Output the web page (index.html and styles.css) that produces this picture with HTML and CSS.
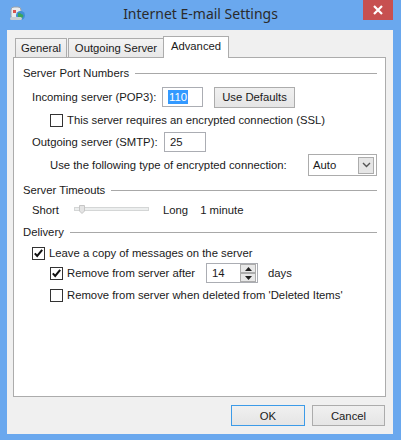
FILE: index.html
```html
<!DOCTYPE html>
<html lang="en">
<head>
    <meta charset="UTF-8">
    <title>Internet E-mail Settings</title>
    <link rel="stylesheet" href="styles.css">
</head>
<body>
<div class="window">
    <div class="titlebar">
        <div class="title-left">
            <svg class="app-icon" width="17" height="17" viewBox="0 0 17 17">
                <rect x="2" y="2" width="10" height="12" rx="3" fill="#e9ecef" stroke="#9aa3ad"/>
                <rect x="4" y="5" width="3" height="3" fill="#d9534f"/>
                <circle cx="11.5" cy="10.5" r="4.5" fill="#3f8fd6"/>
                <path d="M9 8 Q11 7 12 9 Q14 9 14.5 11 Q13 14 11 14 Q10 12 9 12 Z" fill="#3aa55a"/>
                <rect x="1" y="12" width="12" height="3" rx="1.5" fill="#c9ced4"/>
            </svg>
        </div>
        <span class="title">Internet E-mail Settings</span>
        <div class="title-right">
            <div class="close">
                <svg width="10" height="10" viewBox="0 0 10 10"><path d="M1 1 L9 9 M9 1 L1 9" stroke="#fff" stroke-width="2.2"/></svg>
            </div>
        </div>
    </div>

    <div class="client">
        <div class="tabs">
            <div class="tab t-general">General</div>
            <div class="tab t-outgoing">Outgoing Server</div>
            <div class="tab active">Advanced</div>
        </div>

        <div class="panel">
            <div class="group-head"><span>Server Port Numbers</span><div class="rule"></div></div>

            <div class="row r-incoming">
                <span class="lbl w-in">Incoming server (POP3):</span>
                <div class="textbox tb-in"><span class="sel">110</span></div>
                <button class="btn btn-defaults">Use Defaults</button>
            </div>

            <div class="row r-ssl ind2">
                <svg class="cb" width="13" height="13" viewBox="0 0 13 13"><rect x="0.5" y="0.5" width="12" height="12" fill="#fff" stroke="#333"/></svg>
                <span>This server requires an encrypted connection (SSL)</span>
            </div>

            <div class="row r-outgoing">
                <span class="lbl w-out">Outgoing server (SMTP):</span>
                <div class="textbox tb-out">25</div>
            </div>

            <div class="row r-encrypt ind2">
                <span class="lbl w-enc">Use the following type of encrypted connection:</span>
                <div class="select">
                    <span>Auto</span>
                    <div class="drop">
                        <svg width="9" height="6" viewBox="0 0 9 6"><path d="M1 1 L4.5 4.5 L8 1" stroke="#555" stroke-width="1.4" fill="none"/></svg>
                    </div>
                </div>
            </div>

            <div class="group-head g-timeouts"><span>Server Timeouts</span><div class="rule"></div></div>

            <div class="row r-short">
                <span class="lbl w-short">Short</span>
                <svg class="slider" width="75" height="12" viewBox="0 0 75 12">
                    <rect x="0.5" y="3.5" width="74" height="3" fill="#eceeee" stroke="#d4d6d6"/>
                    <path d="M5.5 1.5 H10.5 V7 L8 9.5 L5.5 7 Z" fill="#e4e4e4" stroke="#c6c6c6"/>
                </svg>
                <span class="long">Long</span>
                <span>1 minute</span>
            </div>

            <div class="group-head g-delivery"><span>Delivery</span><div class="rule"></div></div>

            <div class="row r-leave">
                <svg class="cb" width="13" height="13" viewBox="0 0 13 13"><rect x="0.5" y="0.5" width="12" height="12" fill="#fff" stroke="#333"/><path d="M2.8 6.3 L5.2 9 L10.2 2.8" stroke="#111" stroke-width="2" fill="none"/></svg>
                <span>Leave a copy of messages on the server</span>
            </div>

            <div class="row r-remove ind2">
                <svg class="cb" width="13" height="13" viewBox="0 0 13 13"><rect x="0.5" y="0.5" width="12" height="12" fill="#fff" stroke="#333"/><path d="M2.8 6.3 L5.2 9 L10.2 2.8" stroke="#111" stroke-width="2" fill="none"/></svg>
                <span class="lbl w-remove">Remove from server after</span>
                <div class="spinner">
                    <span class="spin-val">14</span>
                    <div class="spin-btns">
                        <div class="spin-btn"><svg width="7" height="4" viewBox="0 0 7 4"><path d="M0 4 L3.5 0 L7 4 Z" fill="#222"/></svg></div>
                        <div class="spin-btn"><svg width="7" height="4" viewBox="0 0 7 4"><path d="M0 0 L3.5 4 L7 0 Z" fill="#222"/></svg></div>
                    </div>
                </div>
                <span class="days">days</span>
            </div>

            <div class="row r-deleted ind2">
                <svg class="cb" width="13" height="13" viewBox="0 0 13 13"><rect x="0.5" y="0.5" width="12" height="12" fill="#fff" stroke="#333"/></svg>
                <span>Remove from server when deleted from 'Deleted Items'</span>
            </div>
        </div>

        <div class="buttons">
            <button class="btn btn-ok">OK</button>
            <button class="btn btn-cancel">Cancel</button>
        </div>
    </div>
</div>
</body>
</html>
```

FILE: styles.css
```css
body {
    margin: 0;
    font-family: "Liberation Sans", Arial, sans-serif;
    font-size: 11.3px;
    color: #1a1a1a;
}
.window {
    width: 401px;
    height: 440px;
    background-color: #6aa8ee;
    display: flex;
    flex-direction: column;
}
.titlebar {
    height: 30px;
    display: grid;
    grid-template-columns: 1fr auto 1fr;
}
.title-left {
    padding: 5px 0 0 9px;
}
.title {
    font-family: "Noto Sans", sans-serif;
    font-size: 14px;
    color: #2b2b2b;
    line-height: 28px;
}
.title-right {
    display: flex;
    justify-content: flex-end;
    padding-right: 8px;
}
.close {
    width: 30px;
    height: 20px;
    background-color: #c75050;
    display: flex;
    align-items: center;
    justify-content: center;
}
.client {
    margin: 0 8px 6px 7px;
    height: 404px;
    background-color: #f0f0f0;
}
/* tab strip */
.tabs {
    height: 27px;
    padding-left: 8px;
    display: flex;
    align-items: flex-end;
}
.tab {
    height: 18px;
    line-height: 19px;
    text-align: center;
    border: 1px solid #acacac;
    border-bottom: none;
    background: linear-gradient(#f3f3f3, #e8e8e8);
    margin-right: 1px;
    white-space: nowrap;
}
.t-general { width: 50px; }
.t-outgoing { width: 94px; }
.tab.active {
    width: 64px;
    height: 21px;
    line-height: 19px;
    margin-left: -2px;
    margin-bottom: -1px;
    background: #fff;
    position: relative;
    z-index: 1;
}
.panel {
    margin-left: 6px;
    width: 354px;
    height: 331px;
    border: 1px solid #acacac;
    background-color: #fff;
    padding: 7px 8px 0 9px;
}
.group-head {
    height: 16px;
    display: flex;
    align-items: center;
}
.group-head .rule {
    flex: 1;
    border-top: 1px solid #a8a8a8;
    margin-left: 6px;
    margin-top: 1px;
}
.row {
    display: flex;
    align-items: center;
    margin-left: 9px;
    white-space: nowrap;
}
.ind2 {
    margin-left: 27px;
}
.cb {
    margin-right: 4px;
    flex-shrink: 0;
}
.lbl {
    flex-shrink: 0;
}
.r-incoming { height: 20px; margin-top: 6px; }
.r-ssl { height: 16px; margin-top: 5px; }
.r-outgoing { height: 20px; margin-top: 4px; }
.r-encrypt { height: 22px; margin-top: 2px; }
.g-timeouts { margin-top: 6px; }
.r-short { height: 16px; margin-top: 4px; }
.g-delivery { margin-top: 6px; }
.r-leave { height: 16px; margin-top: 5px; }
.r-remove { height: 20px; margin-top: 2px; }
.r-deleted { height: 16px; margin-top: 4px; }

.w-in { width: 130px; }
.w-out { width: 132px; }
.w-enc { width: 258px; }
.w-short { width: 42px; }
.w-remove { width: 139px; }

.textbox {
    height: 18px;
    border: 1px solid #abadb3;
    background: #fff;
    display: flex;
    align-items: center;
    padding-left: 5px;
}
.tb-in { width: 34px; }
.tb-out { width: 35px; }
.sel {
    background-color: #3399ff;
    color: #fff;
    padding: 1px 1px;
}
.btn {
    font-family: inherit;
    font-size: 11.3px;
    color: #1a1a1a;
    border: 1px solid #acacac;
    background: linear-gradient(#f0f0f0, #e5e5e5);
    padding: 0;
    height: 21px;
}
.btn-defaults {
    width: 81px;
    margin-left: 11px;
}
.select {
    width: 64px;
    height: 20px;
    border: 1px solid #acacac;
    background: #fff;
    display: flex;
    align-items: center;
    justify-content: space-between;
    padding-left: 4px;
}
.drop {
    width: 14px;
    height: 15px;
    margin-right: 2px;
    border: 1px solid #acacac;
    background: #e6e6e6;
    display: flex;
    align-items: center;
    justify-content: center;
}
.slider {
    flex-shrink: 0;
}
.long {
    margin-left: 14px;
    margin-right: 12px;
}
.spinner {
    width: 50px;
    height: 18px;
    border: 1px solid #abadb3;
    display: flex;
    align-items: center;
    justify-content: space-between;
}
.spin-val {
    padding-left: 5px;
}
.spin-btns {
    display: flex;
    flex-direction: column;
    margin-right: 1px;
}
.spin-btn {
    width: 14px;
    height: 7px;
    border: 1px solid #acacac;
    background: #e8e8e8;
    display: flex;
    align-items: center;
    justify-content: center;
}
.days {
    margin-left: 10px;
}
.buttons {
    display: flex;
    justify-content: flex-end;
    gap: 7px;
    margin-top: 8px;
    padding-right: 8px;
}
.btn-ok {
    width: 74px;
    border-color: #3c9be8;
}
.btn-cancel {
    width: 73px;
}
```
